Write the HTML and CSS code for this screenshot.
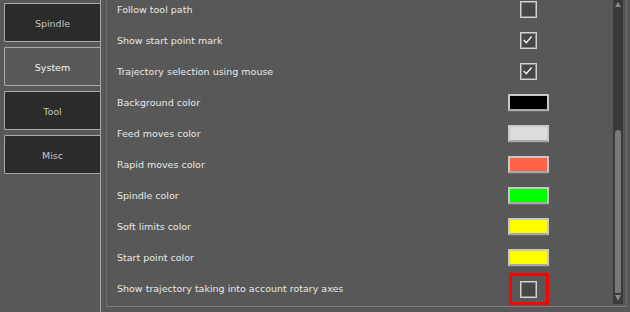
FILE: index.html
```html
<!DOCTYPE html>
<html>
<head>
<meta charset="utf-8">
<link rel="stylesheet" href="styles.css">
</head>
<body>
<div class="app">
  <nav class="tabs">
    <div class="tab">Spindle</div>
    <div class="tab active">System</div>
    <div class="tab">Tool</div>
    <div class="tab">Misc</div>
  </nav>
  <section class="panel">
    <div class="list">
      <div class="row"><span class="label">Follow tool path</span><span class="ctl"><span class="check"></span></span></div>
      <div class="row"><span class="label">Show start point mark</span><span class="ctl"><span class="check"><svg viewBox="0 0 17 17" width="15" height="15"><polyline points="3,8 6,11 12,4" fill="none" stroke="#f2f2f2" stroke-width="1.6"/></svg></span></span></div>
      <div class="row"><span class="label">Trajectory selection using mouse</span><span class="ctl"><span class="check"><svg viewBox="0 0 17 17" width="15" height="15"><polyline points="3,8 6,11 12,4" fill="none" stroke="#f2f2f2" stroke-width="1.6"/></svg></span></span></div>
      <div class="row"><span class="label">Background color</span><span class="ctl"><span class="swatch sw-black"></span></span></div>
      <div class="row"><span class="label">Feed moves color</span><span class="ctl"><span class="swatch sw-feed"></span></span></div>
      <div class="row"><span class="label">Rapid moves color</span><span class="ctl"><span class="swatch sw-rapid"></span></span></div>
      <div class="row"><span class="label">Spindle color</span><span class="ctl"><span class="swatch sw-spindle"></span></span></div>
      <div class="row"><span class="label">Soft limits color</span><span class="ctl"><span class="swatch sw-yellow"></span></span></div>
      <div class="row"><span class="label">Start point color</span><span class="ctl"><span class="swatch sw-yellow"></span></span></div>
      <div class="row"><span class="label">Show trajectory taking into account rotary axes</span><span class="ctl"><span class="highlight"><span class="check"></span></span></span></div>
    </div>
    <div class="scrollbar">
      <span class="arrow up"></span>
      <span class="track-space"></span>
      <span class="thumb"></span>
      <span class="arrow down"></span>
    </div>
  </section>
</div>
</body>
</html>
```
FILE: styles.css
```css
html, body {
  margin: 0;
  padding: 0;
  background: #585858;
}
body {
  width: 630px;
  height: 312px;
  overflow: hidden;
  font-family: "DejaVu Sans", Verdana, sans-serif;
  font-size: 9.5px;
}
.app {
  display: flex;
  height: 312px;
}
.tabs {
  width: 96px;
  padding: 3px 0 0 4px;
  border-right: 1px solid #a6a6a6;
  display: flex;
  flex-direction: column;
  gap: 5px;
}
.tab {
  height: 39px;
  box-sizing: border-box;
  border: 1px solid #a9a9a9;
  border-right: none;
  border-radius: 2px 0 0 2px;
  background: #2b2b2b;
  color: #c4c4c4;
  display: flex;
  align-items: center;
  justify-content: center;
  padding-top: 2px;
}
.tab.active {
  background: #585858;
  color: #f2f2f2;
}
.panel {
  margin-left: 5px;
  width: 521px;
  height: 307px;
  box-sizing: border-box;
  border-left: 1px solid #6c6c6c;
  border-right: 1px solid #6c6c6c;
  border-bottom: 1px solid #7c7c7c;
  display: flex;
  overflow: hidden;
}
.list {
  flex: 1;
  margin-top: -6px;
  padding-left: 10px;
  padding-right: 64px;
}
.row {
  height: 31px;
  display: grid;
  grid-template-columns: 1fr 41px;
  align-items: center;
  color: #e8e8e8;
}
.ctl {
  display: flex;
  justify-content: center;
  align-items: center;
  height: 31px;
}
.check {
  width: 17px;
  height: 17px;
  box-sizing: border-box;
  border: 1px solid #d2d2d2;
  box-shadow: inset 0 0 0 1px #8c8c8c;
  background: #474747;
  display: flex;
  align-items: center;
  justify-content: center;
}
.swatch {
  width: 41px;
  height: 17px;
  box-sizing: border-box;
  border: 2px solid #c8c8c8;
  border-bottom-color: #a8a8a8;
  box-shadow: 0 1px 0 #6a6a6a;
}
.sw-black { background: #000000; }
.sw-feed { background: #dcdcdc; }
.sw-rapid { background: #ff6347; }
.sw-spindle { background: #00ff00; }
.sw-yellow { background: #ffff00; }
.highlight {
  width: 40px;
  height: 32px;
  box-sizing: border-box;
  border: 3px solid #ff0000;
  display: flex;
  align-items: center;
  justify-content: center;
  margin-top: 1px;
}
.scrollbar {
  width: 10px;
  margin-right: 3px;
  margin-bottom: 2px;
  background: #3a3a3a;
  display: flex;
  flex-direction: column;
  align-items: center;
}
.arrow {
  width: 0;
  height: 0;
  border-left: 3px solid transparent;
  border-right: 3px solid transparent;
}
.arrow.up {
  margin-top: 2px;
  border-bottom: 5px solid #8a8a8a;
}
.arrow.down {
  margin: 2px 0 3px;
  border-top: 6px solid #8a8a8a;
}
.track-space {
  flex: 1;
}
.thumb {
  width: 6px;
  height: 163px;
  background: #7a7a7a;
  border-radius: 3px 3px 0 0;
}
```
